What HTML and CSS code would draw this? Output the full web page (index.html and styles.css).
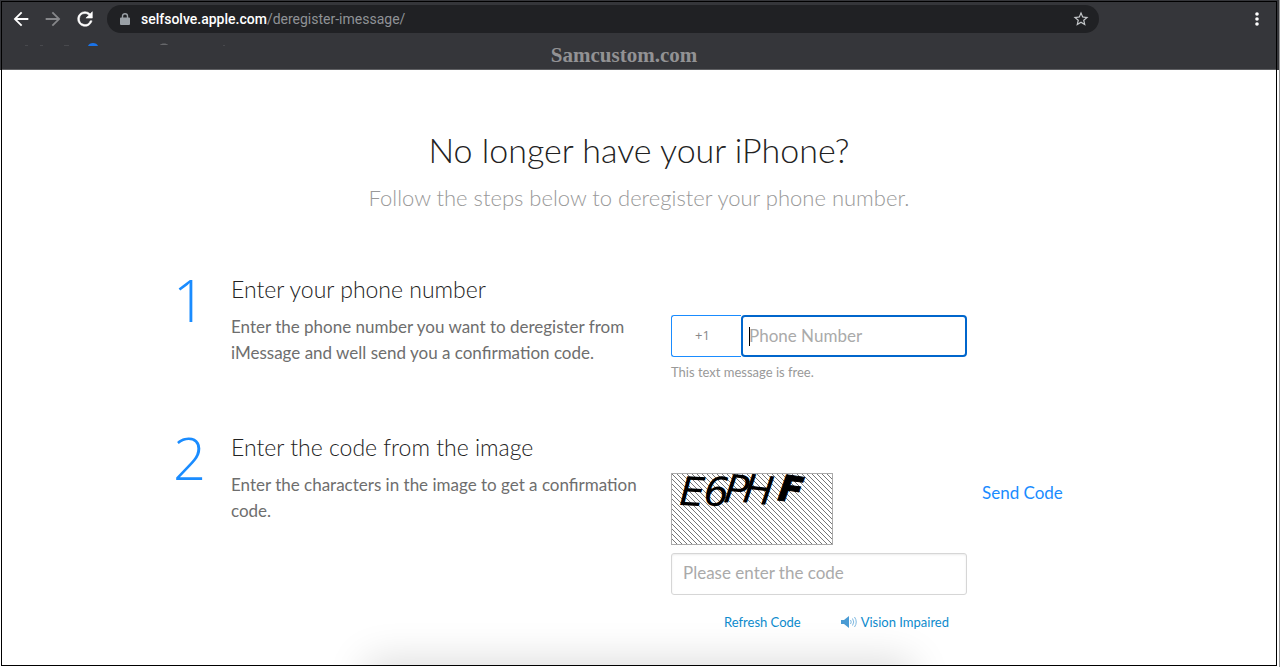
FILE: index.html
```html
<!DOCTYPE html>
<html lang="en">
<head>
  <meta charset="utf-8">
  <title>Deregister iMessage</title>
  <meta name="viewport" content="width=device-width,initial-scale=1">
  <link rel="stylesheet" href="styles.css">
</head>
<body>
<div class="frame">

  <!-- Browser bar -->
  <header class="browser">
    <div class="toolbar">
      <button class="tool" aria-label="Back">
        <svg viewBox="0 0 24 24" width="22" height="22"><path d="M20 11H7.83l5.59-5.59L12 4l-8 8 8 8 1.41-1.41L7.83 13H20v-2z"/></svg>
      </button>
      <button class="tool dim" aria-label="Forward">
        <svg viewBox="0 0 24 24" width="22" height="22"><path d="M12 4l-1.41 1.41L16.17 11H4v2h12.17l-5.58 5.59L12 20l8-8z"/></svg>
      </button>
      <button class="tool" aria-label="Reload">
        <svg viewBox="0 0 24 24" width="22" height="22"><path stroke="#fff" stroke-width=".6" d="M17.65 6.35A7.96 7.96 0 0 0 12 4a8 8 0 1 0 7.73 10h-2.08A6 6 0 1 1 12 6c1.66 0 3.14.69 4.22 1.78L13 11h7V4l-2.35 2.35z"/></svg>
      </button>
      <div class="address">
        <svg class="lock" viewBox="0 0 10 12" width="10" height="12"><path d="M1 4.500h8a1 1 0 0 1 1 1V11a1 1 0 0 1-1 1H1a1 1 0 0 1-1-1V5.500a1 1 0 0 1 1-1z"/><path class="shackle" d="M2.500 5V3a2.500 2.300 0 0 1 5 0v2"/></svg>
        <p class="url"><span class="host">selfsolve.apple.com</span>/deregister-imessage/</p>
        <button class="star" aria-label="Bookmark this page">
          <svg viewBox="0 0 24 24" width="18" height="18"><path d="M22 9.240l-7.190-.620L12 2 9.190 8.630 2 9.240l5.460 4.730L5.820 21 12 17.270 18.180 21l-1.630-7.030L22 9.240zM12 15.400l-3.760 2.270 1-4.280-3.320-2.880 4.380-.380L12 6.100l1.710 4.040 4.380.380-3.320 2.880 1 4.280L12 15.400z"/></svg>
        </button>
      </div>
      <div class="menu">
        <button class="tool" aria-label="Menu">
          <svg viewBox="0 0 4 14" width="4" height="14"><circle cx="2" cy="2" r="1.800"/><circle cx="2" cy="7" r="1.800"/><circle cx="2" cy="12" r="1.800"/></svg>
        </button>
      </div>
    </div>
    <div class="bookmarks">
      <svg width="240" height="3" viewBox="0 0 240 3">
        <path fill="#1a73e8" d="M86 3c1-4 9-4 10 0z"/>
        <path fill="#66676a" d="M158 2c1-2 7-2 8 0z"/>
        <path fill="#48494d" d="M23 2h3v1h-3zM38 2h3v1h-3zM62 2h5v1h-5zM221 2h2v1h-2z"/>
      </svg>
    </div>
    <p class="brand">Samcustom.com</p>
  </header>

  <main>
    <section class="hero">
      <h1>No longer have your iPhone?</h1>
      <p>Follow the steps below to deregister your phone number.</p>
    </section>

    <section class="step">
      <div class="number">1</div>
      <div class="info">
        <h2>Enter your phone number</h2>
        <p>Enter the phone number you want to deregister from iMessage and well send you a confirmation code.</p>
      </div>
      <div class="fields">
        <div class="phone">
          <input class="country" type="text" value="+1" aria-label="Country code">
          <div class="phone-box">
            <input class="phone-input" type="tel" placeholder="Phone Number" aria-label="Phone Number">
            <span class="caret"></span>
          </div>
        </div>
        <p class="note">This text message is free.</p>
      </div>
    </section>

    <section class="step">
      <div class="number">2</div>
      <div class="info">
        <h2>Enter the code from the image</h2>
        <p>Enter the characters in the image to get a confirmation code.</p>
      </div>
      <div class="fields">
        <svg class="captcha" viewBox="0 0 160 70" width="162" height="72" role="img" aria-label="Code image">
          <defs>
            <pattern id="hatch" width="5" height="5" patternUnits="userSpaceOnUse">
              <path d="M-1-1l7 7M4-1l2 2M-1 4l2 2" stroke="#666" stroke-width=".9"/>
            </pattern>
          </defs>
          <rect width="160" height="70" fill="url(#hatch)"/>
          <g class="letters">
            <text x="7" y="31" transform="rotate(3 7 31)">E</text>
            <text x="31" y="31" transform="rotate(3 31 31)">6</text>
            <text x="51" y="28" transform="rotate(7 51 28)">P</text>
            <text x="70" y="28" transform="rotate(7 70 28)">H</text>
            <text class="heavy" x="105" y="26" transform="rotate(8 105 26)">F</text>
          </g>
        </svg>
        <input class="code-input" type="text" placeholder="Please enter the code" aria-label="Code from the image">
        <div class="links">
          <a href="#">Refresh Code</a>
          <a href="#" class="audio">
            <svg viewBox="0 0 16 12" width="16" height="12"><path fill="#4a9bd4" d="M0 4h3l5-4v12L3 8H0z"/><path fill="none" stroke="#7db8e0" d="M9.500 4q1.500 2 0 4M11.500 2.500q2.500 3.500 0 7M13.500 1q3.500 5 0 10"/></svg>
            Vision Impaired
          </a>
        </div>
      </div>
      <a href="#" class="send">Send Code</a>
    </section>
  </main>

</div>
</body>
</html>
```
FILE: styles.css
```css
/* RESET */
* { box-sizing:border-box; margin:0; padding:0; }
html { background:#fff; }
a { text-decoration:none; }
button { border:none; background:none; cursor:pointer; }
svg { display:block; }

body {
  min-height:100vh; display:flex;
  padding:1px 2px 1px 1px; border-right:1px solid #999;
  font-family:Lato, sans-serif; font-size:17px; line-height:26px; color:#6e6e6e;
  background:linear-gradient(#35363a 70px, #fff 70px);
}

.frame {
  flex:1; position:relative; overflow:hidden;
  border:1px solid #000;
}
.frame::after {
  content:""; position:absolute; top:100%; left:29%; right:29%;
  height:40px; box-shadow:0 0 40px 5px rgba(0,0,0,.14);
}

/* BROWSER BAR */
.browser {
  background:#35363a; border-bottom:1px solid #5f6063;
  padding:3px 0 5px;
}
.toolbar { display:flex; align-items:center; padding-left:3px; }
.tool {
  width:32px; height:28px; fill:#fff;
  display:flex; align-items:center; justify-content:center;
}
.tool.dim { fill:#86878a; }
.address {
  flex:1; height:28px; margin-left:6px; padding:0 9px 0 13px;
  display:flex; align-items:center; gap:11px;
  border-radius:14px; background:#202124;
}
.lock { fill:#9aa0a6; }
.shackle { fill:none; stroke:#9aa0a6; stroke-width:1.4; }
.url {
  flex:1; font-family:Roboto, sans-serif; font-size:14px; line-height:20px;
  color:#8f9296;
}
.host { color:#fff; font-weight:500; }
.star { fill:#c4c7ca; }
.menu { width:177px; padding-right:3px; display:flex; justify-content:flex-end; }
.bookmarks { padding-top:10px; }
.brand {
  text-align:center; padding-right:30px;
  font-family:"Liberation Serif", serif; font-weight:700;
  font-size:21px; line-height:18px; color:#929294;
}

/* CONTENT */
main { max-width:960px; margin:0 auto; }
.hero { text-align:center; padding:56px 0 58px; }
.hero h1 {
  font-size:34px; line-height:48px; font-weight:300; color:#222;
}
.hero p {
  font-size:22px; line-height:32px; font-weight:300; color:#999;
  margin-top:8px;
}

/* STEPS */
.step {
  display:grid; grid-template-columns:57px 425px 296px 1fr; column-gap:15px;
  min-height:158px;
}
.number {
  text-align:center; padding-left:4px; font-family:"Open Sans", sans-serif;
  font-size:58px; line-height:56px; font-weight:300; color:#1a8cff;
}
.info h2 {
  font-size:23px; line-height:34px; font-weight:300; color:#222;
  margin-bottom:8px;
}
.fields { padding-top:43px; }
.phone { display:flex; }
input {
  height:42px; font-family:inherit; font-size:17px; color:#888;
  background:#fff; outline:none;
}
input::placeholder { color:#aaa; opacity:1; }
.country {
  width:70px; padding:0 8px 3px 0; text-align:center;
  font-family:"Open Sans", sans-serif; font-size:13px;
  border:1px solid #1a8cff; border-right:none; border-radius:3px 0 0 3px;
}
.phone-box { flex:1; position:relative; }
.phone-input {
  width:100%; padding:0 6px 2px;
  border:2px solid #0066cc; border-radius:4px;
}
.caret {
  position:absolute; left:8px; top:12px;
  width:1px; height:19px; background:#000;
}
.note { font-size:13px; line-height:20px; color:#999; margin-top:5px; }

/* CODE IMAGE */
.captcha { border:1px solid #aaa; background:#fff; }
.letters {
  font-family:"DejaVu Sans", sans-serif; font-style:italic;
  font-size:40px; fill:#000;
}
.heavy { font-weight:700; font-size:36px; stroke:#000; }
.code-input {
  width:100%; margin-top:8px; padding:0 11px 3px;
  border:1px solid #d6d6d6; border-radius:3px;
  box-shadow:inset 0 1px 2px rgba(0,0,0,.08);
}
.links {
  display:flex; justify-content:flex-end; gap:40px;
  margin-top:17px; padding-right:18px;
  font-size:13px; line-height:20px;
}
.links a { color:#0d8bcd; }
.audio { display:flex; align-items:center; gap:4px; }
.send { margin-top:50px; color:#1a8cff; }
```
